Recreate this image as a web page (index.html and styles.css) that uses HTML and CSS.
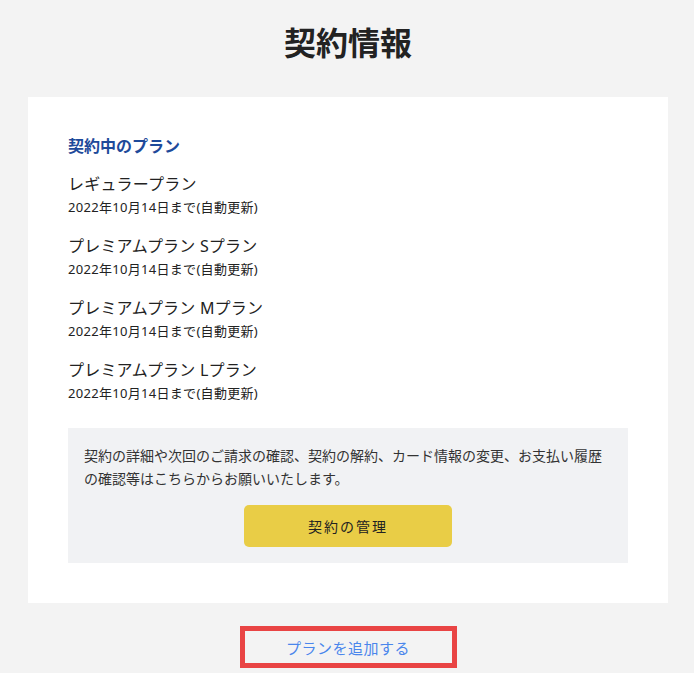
FILE: index.html
```html
<!DOCTYPE html>
<html lang="ja">
<head>
  <meta charset="utf-8">
  <title>契約情報</title>
  <link rel="stylesheet" href="styles.css">
</head>
<body>
  <div class="page">
    <h1 class="page-title">契約情報</h1>

    <div class="card">
      <h2 class="section-title">契約中のプラン</h2>

      <div class="plan">
        <p class="plan-name">レギュラープラン</p>
        <p class="plan-date">2022年10月14日まで(自動更新)</p>
      </div>
      <div class="plan">
        <p class="plan-name">プレミアムプラン Sプラン</p>
        <p class="plan-date">2022年10月14日まで(自動更新)</p>
      </div>
      <div class="plan">
        <p class="plan-name">プレミアムプラン Mプラン</p>
        <p class="plan-date">2022年10月14日まで(自動更新)</p>
      </div>
      <div class="plan">
        <p class="plan-name">プレミアムプラン Lプラン</p>
        <p class="plan-date">2022年10月14日まで(自動更新)</p>
      </div>

      <div class="manage-box">
        <p class="manage-text">契約の詳細や次回のご請求の確認、契約の解約、カード情報の変更、お支払い履歴の確認等はこちらからお願いいたします。</p>
        <button class="manage-button">契約の管理</button>
      </div>
    </div>

    <div class="add-plan">
      <a class="add-plan-link" href="#">プランを追加する</a>
    </div>
  </div>
</body>
</html>
```

FILE: styles.css
```css
body {
  margin: 0;
  background-color: #f3f3f3;
  font-family: "Noto Sans", "Noto Sans CJK JP", sans-serif;
  color: #222;
}

.page {
  padding: 20px 26px 0 28px;
}

.page-title {
  margin: 0;
  font-size: 32px;
  line-height: 45px;
  font-weight: bold;
  text-align: center;
  color: #222;
}

.card {
  margin-top: 32px;
  background-color: #fff;
  padding: 37px 40px 40px;
}

.section-title {
  margin: 0 0 14px;
  font-size: 16px;
  line-height: 24px;
  font-weight: bold;
  color: #1e4a9a;
}

.plan {
  margin-bottom: 16px;
}

.plan p {
  margin: 0;
}

.plan-name {
  font-size: 16px;
  line-height: 24px;
  letter-spacing: 0.2px;
}

.plan-date {
  font-size: 13px;
  line-height: 22px;
  letter-spacing: 0.3px;
}

.manage-box {
  margin-top: 24px;
  background-color: #f1f2f4;
  padding: 16px 16px 16px;
  display: flex;
  flex-direction: column;
  align-items: center;
}

.manage-text {
  margin: 0;
  align-self: stretch;
  font-size: 14px;
  line-height: 23px;
  color: #333;
}

.manage-button {
  margin-top: 15px;
  width: 208px;
  height: 42px;
  background-color: #e9cd46;
  border: none;
  border-radius: 5px;
  font-family: inherit;
  font-size: 14px;
  letter-spacing: 2px;
  color: #222;
  cursor: pointer;
}

.add-plan {
  display: flex;
  justify-content: center;
  margin-top: 23px;
}

.add-plan-link {
  display: flex;
  align-items: center;
  justify-content: center;
  width: 217px;
  height: 42px;
  box-sizing: border-box;
  border: 5px solid #e94444;
  font-size: 15px;
  letter-spacing: 0.5px;
  color: #4a86ec;
  text-decoration: none;
}
```
